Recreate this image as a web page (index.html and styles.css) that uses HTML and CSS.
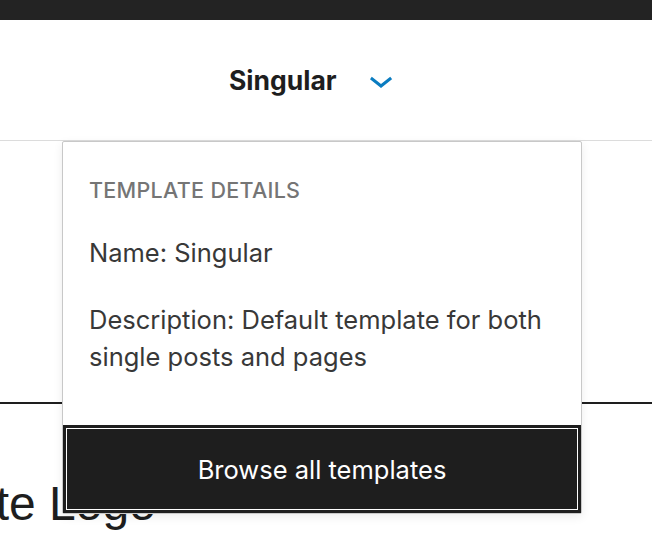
FILE: index.html
```html
<!DOCTYPE html>
<html lang="en">
<head>
<meta charset="utf-8">
<title>Template details</title>
<link rel="stylesheet" href="styles.css">
</head>
<body>
<div class="topbar"></div>
<header class="header">
  <button class="title-button" type="button">
    <span class="title">Singular</span>
    <svg class="chevron" viewBox="0 0 24 24" width="48" height="48" aria-hidden="true"><path d="M17.5 11.6L12 16l-5.5-4.4.9-1.2L12 14l4.6-3.6 1 1.2z"/></svg>
  </button>
</header>
<main class="canvas">
  <div class="separator"></div>
  <div class="site-logo">Site Logo</div>
  <div class="popover">
    <div class="popover-body">
      <h2 class="details-heading">Template details</h2>
      <p class="details-name">Name: Singular</p>
      <p class="details-desc">Description: Default template for both single posts and pages</p>
    </div>
    <button class="browse" type="button">Browse all templates</button>
  </div>
</main>
</body>
</html>
```
FILE: styles.css
```css
* { box-sizing: border-box; }
html, body { margin: 0; padding: 0; background: #fff; }
body {
  width: 652px;
  height: 550px;
  overflow: hidden;
  font-family: Inter, "Noto Sans", sans-serif;
  color: #1e1e1e;
}
.topbar { height: 20px; background: #232323; }
.header {
  height: 121px;
  border-bottom: 1px solid #dcdcdc;
  display: flex;
  align-items: center;
  padding-left: 229px;
}
.title-button {
  display: flex;
  align-items: center;
  gap: 20px;
  background: none;
  border: 0;
  padding: 0;
  font: inherit;
  color: inherit;
}
.title {
  font-size: 26.5px;
  font-weight: 700;
  color: #1e1e1e;
}
.chevron { fill: #0a7cc0; display: block; }
.canvas {
  position: relative;
  height: 409px;
  padding-top: 261px;
}
.separator {
  height: 2px;
  background: #1e1e1e;
}
.site-logo {
  margin-top: 76px;
  margin-left: -47px;
  font-family: "Liberation Sans", Arial, sans-serif;
  font-size: 48px;
  line-height: 1;
  color: #1e1e1e;
  white-space: nowrap;
}
.popover {
  position: absolute;
  left: 62px;
  top: 0;
  width: 520px;
  background: #fff;
  border: 1px solid #c8c8c8;
  border-radius: 2px;
  box-shadow: 0 3px 10px rgba(0,0,0,0.08);
}
.popover-body { padding: 36px 18px 50px 26px; }
.details-heading {
  margin: 0;
  font-size: 21.5px;
  font-weight: 500;
  line-height: 1.2;
  text-transform: uppercase;
  color: #757575;
  letter-spacing: 0.3px;
}
.details-name {
  margin: 30px 0 0;
  font-size: 25.5px;
  line-height: 1.46;
  color: #383838;
}
.details-desc {
  margin: 30px 0 0;
  font-size: 25.5px;
  line-height: 1.46;
  color: #383838;
}
.browse {
  display: block;
  width: 100%;
  height: 88px;
  border: 0;
  border-radius: 0;
  background: #1e1e1e;
  color: #fff;
  font-family: inherit;
  font-size: 25.5px;
  box-shadow: inset 0 0 0 3px #1e1e1e, inset 0 0 0 4px #fff;
}
```
